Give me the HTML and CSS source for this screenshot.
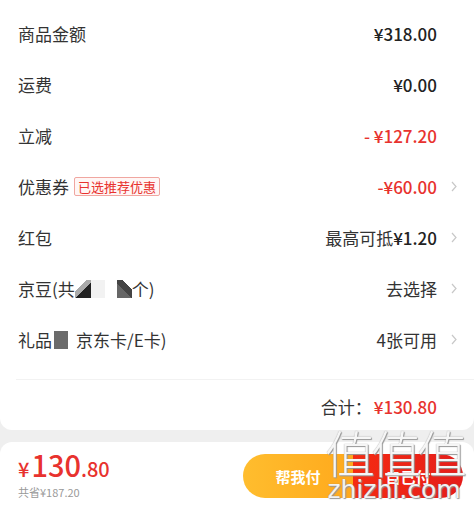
FILE: index.html
```html
<!DOCTYPE html>
<html lang="zh">
<head>
<meta charset="utf-8">
<link rel="stylesheet" href="styles.css">
</head>
<body>
<div class="page">
  <div class="card">
    <div class="row">
      <div class="label">商品金额</div>
      <div class="value">¥318.00</div>
      <div class="chev"></div>
    </div>
    <div class="row">
      <div class="label">运费</div>
      <div class="value">¥0.00</div>
      <div class="chev"></div>
    </div>
    <div class="row">
      <div class="label">立减</div>
      <div class="value red">-&nbsp;¥127.20</div>
      <div class="chev"></div>
    </div>
    <div class="row">
      <div class="label">优惠券<span class="tag">已选推荐优惠</span></div>
      <div class="value red">-¥60.00</div>
      <div class="chev"><svg width="6" height="11" viewBox="0 0 6 11"><path d="M1 1l4 4.5L1 10" fill="none" stroke="#c8c8c8" stroke-width="1.2"/></svg></div>
    </div>
    <div class="row">
      <div class="label">红包</div>
      <div class="value"><span class="reg">最高可抵</span>¥1.20</div>
      <div class="chev"><svg width="6" height="11" viewBox="0 0 6 11"><path d="M1 1l4 4.5L1 10" fill="none" stroke="#c8c8c8" stroke-width="1.2"/></svg></div>
    </div>
    <div class="row">
      <div class="label">京豆(共<span class="mask"><i class="m1"></i><i class="m2"></i><i class="m3"></i></span>个)</div>
      <div class="value light">去选择</div>
      <div class="chev"><svg width="6" height="11" viewBox="0 0 6 11"><path d="M1 1l4 4.5L1 10" fill="none" stroke="#c8c8c8" stroke-width="1.2"/></svg></div>
    </div>
    <div class="row">
      <div class="label">礼品<span class="mask"><i class="m4"></i></span>京东卡/E卡)</div>
      <div class="value light">4张可用</div>
      <div class="chev"><svg width="6" height="11" viewBox="0 0 6 11"><path d="M1 1l4 4.5L1 10" fill="none" stroke="#c8c8c8" stroke-width="1.2"/></svg></div>
    </div>
    <div class="divider"></div>
    <div class="total">
      <span class="total-label">合计：</span><span class="total-value">¥130.80</span>
      <div class="chev"></div>
    </div>
  </div>
  <div class="bar">
    <div class="price">
      <div class="big"><span class="cur">¥</span><span class="int">130</span><span class="dec">.80</span></div>
      <div class="save">共省¥187.20</div>
    </div>
    <div class="btns">
      <div class="btn orange">帮我付</div>
      <div class="btn redbtn">自己付</div>
    </div>
  </div>
  <div class="watermark">
    <div class="wm-big">值值值</div>
    <div class="wm-small">zhizhi.com</div>
  </div>
</div>
</body>
</html>
```
FILE: styles.css
```css
* { box-sizing: border-box; margin: 0; padding: 0; }
html, body { width: 474px; height: 506px; overflow: hidden; }
body {
  background: #efefef;
  font-family: "Noto Sans CJK SC", "Noto Sans", sans-serif;
  color: #333;
}
.page { position: relative; width: 474px; height: 506px; display: flex; flex-direction: column; }
.card {
  background: #fff;
  border-radius: 0 0 12px 12px;
  padding-top: 8px;
  height: 430px;
}
.row {
  height: 51px;
  display: flex;
  align-items: center;
  padding: 0 17px 0 18px;
}
.label {
  flex: 1;
  font-size: 17px;
  color: #333;
  display: flex;
  align-items: center;
  white-space: nowrap;
}
.value {
  font-size: 17px;
  font-weight: 500;
  color: #222;
  white-space: nowrap;
}
.value .reg { font-weight: 400; color: #333; }
.value.light { font-weight: 400; color: #333; }
.value.red, .red { color: #e8322e; }
.chev { width: 20px; display: flex; justify-content: flex-end; align-items: center; }
.tag {
  margin-left: 5px;
  font-size: 13px;
  line-height: 17px;
  color: #e8322e;
  background: #fff6f5;
  border: 1px solid #f0a6a0;
  border-radius: 2px;
  padding: 0 3px;
}
.mask { display: inline-flex; align-items: center; height: 20px; }
.mask i { display: inline-block; height: 18px; }
.m1 { width: 16px; background: linear-gradient(135deg, #fff 35%, #aaa 35%, #aaa 55%, #222 55%); }
.m2 { width: 14px; background: #f2f2f2; margin-right: 12px; }
.m3 { width: 15px; background: linear-gradient(225deg, #fff 30%, #444 30%, #444 55%, #666 55%); }
.m4 { width: 14px; background: #6b6b6b; margin: 0 8px 0 2px; }
.divider {
  height: 1px;
  background: #f2f2f2;
  margin: 14px 0 0 16px;
}
.total {
  height: 52px;
  display: flex;
  align-items: center;
  justify-content: flex-end;
  padding-right: 17px;
  font-size: 17px;
}
.total-label { color: #333; }
.total-value { color: #e8322e; font-weight: 500; margin-left: 2px; }
.bar {
  margin-top: 12px;
  flex: 1;
  background: #fff;
  border-radius: 12px 12px 0 0;
  display: flex;
  align-items: center;
  justify-content: space-between;
  padding: 0 11px 0 18px;
}
.price { display: flex; flex-direction: column; }
.big { color: #e8322e; display: flex; align-items: baseline; line-height: 30px; font-weight: 500; }
.cur { font-size: 20px; margin-right: 2px; }
.int { font-size: 29px; }
.dec { font-size: 20px; }
.save { font-size: 11px; color: #999; line-height: 16px; }
.btns { display: flex; height: 44px; margin-top: 4px; }
.btn {
  width: 110px;
  height: 44px;
  display: flex;
  align-items: center;
  justify-content: center;
  color: #fff;
  font-size: 15px;
  font-weight: 700;
}
.orange { background: linear-gradient(90deg, #ffbd2e, #ffa91c); border-radius: 22px 0 0 22px; }
.redbtn { background: linear-gradient(90deg, #f52b12, #e51d1a); border-radius: 0 22px 22px 0; }
.watermark {
  position: absolute;
  left: 320px;
  top: 424px;
  width: 148px;
  color: rgba(255,255,255,0.92);
  text-align: center;
  pointer-events: none;
}
.wm-big {
  font-size: 50px;
  line-height: 54px;
  letter-spacing: -4px;
  font-weight: 300;
  text-shadow: 0 0 1px #888, 1px 1px 1px #999;
}
.wm-small {
  font-family: "DejaVu Sans", sans-serif;
  font-size: 25px;
  line-height: 24px;
  letter-spacing: 0;
  text-shadow: 0 0 1px #777, 1px 1px 1px #999;
}
```
